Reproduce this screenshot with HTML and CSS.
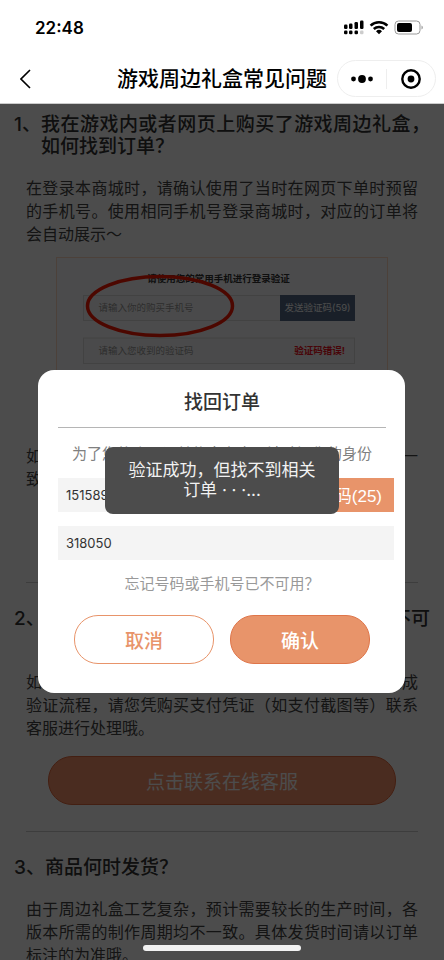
FILE: index.html
```html
<!DOCTYPE html>
<html lang="zh-CN">
<head>
<meta charset="utf-8">
<meta name="viewport" content="width=device-width, initial-scale=1">
<title>游戏周边礼盒常见问题</title>
<link rel="stylesheet" href="styles.css">
</head>
<body>
<div class="status">
  <span class="time">22:48</span>
  <svg class="status-icons" width="80" height="16" viewBox="0 0 80 16" aria-hidden="true">
    <rect x="0" y="4.500" width="3.500" height="4.500" rx="1.200"/>
    <rect x="5" y="3.500" width="3.500" height="5.500" rx="1.200"/>
    <rect x="10.500" y="2" width="3.500" height="7" rx="1.200"/>
    <rect x="16" y="0.500" width="3.500" height="8.500" rx="1.200"/>
    <rect x="0" y="10.500" width="3.500" height="3.800" rx="1.200"/>
    <rect x="5" y="10.500" width="3.500" height="3.800" rx="1.200"/>
    <rect x="10.500" y="10.500" width="3.500" height="3.800" rx="1.200"/>
    <rect x="16" y="10.500" width="3.500" height="3.800" rx="1.200" fill="#ccc"/>
    <g fill="none" stroke="#000" stroke-width="2.600">
      <path d="M26.600 5.600a12.200 12.200 0 0 1 16.800 0"/>
      <path d="M29.800 9a7.800 7.800 0 0 1 10.400 0"/>
    </g>
    <path d="M35 14.200l-3-3a4.400 4.400 0 0 1 6 0z"/>
    <rect x="51" y="1" width="25" height="13" rx="3.500" fill="none" stroke="#999"/>
    <rect x="53" y="3" width="15" height="9" rx="2"/>
    <path d="M77.500 5.500c1.800.6 1.800 3.400 0 4z" fill="#999"/>
  </svg>
</div>
<header class="nav">
  <button class="back" type="button" aria-label="返回">
    <svg width="12" height="20" viewBox="0 0 12 20"><path d="M10 1L1 10l9 9" fill="none" stroke="#000" stroke-width="1.600"/></svg>
  </button>
  <h1>游戏周边礼盒常见问题</h1>
  <div class="capsule">
    <button type="button" aria-label="更多">
      <svg width="24" height="20" viewBox="0 0 24 20"><circle cx="3.500" cy="10" r="2.400"/><circle cx="12" cy="10" r="3.900"/><circle cx="20.500" cy="10" r="2.400"/></svg>
    </button>
    <button type="button" aria-label="关闭">
      <svg width="20" height="20" viewBox="0 0 20 20"><circle cx="10" cy="10" r="8.700" fill="none" stroke="#000" stroke-width="2.400"/><circle cx="10" cy="10" r="3.400"/></svg>
    </button>
  </div>
</header>
<main class="page">
  <div class="faq">
    <section>
      <h2 class="first"><span>1、</span><span>我在游戏内或者网页上购买了游戏周边礼盒，如何找到订单？</span></h2>
      <p>在登录本商城时，请确认使用了当时在网页下单时预留的手机号。使用相同手机号登录商城时，对应的订单将会自动展示～</p>
      <svg class="shot" viewBox="0 0 664 348" role="img" aria-label="登录验证示例">
        <rect x="1" y="1" width="662" height="346" fill="#fcfcff" stroke="#ffd9c2" stroke-width="2"/>
        <text x="325" y="49" font-size="19" font-weight="700" fill="#333" text-anchor="middle">请使用您的常用手机进行登录验证</text>
        <rect x="55" y="77" width="542" height="50" fill="#f9f9fb" stroke="#ddd" stroke-width="2"/>
        <text x="85" y="108" font-size="19" fill="#999">请输入你的购买手机号</text>
        <rect x="448" y="76" width="150" height="52" fill="#546a88"/>
        <text x="523" y="108" font-size="19" fill="#fff" text-anchor="middle">发送验证码(59)</text>
        <rect x="55" y="162" width="542" height="51" fill="#f9f9fb" stroke="#ddd" stroke-width="2"/>
        <text x="85" y="194" font-size="19" fill="#999">请输入您收到的验证码</text>
        <text x="578" y="194" font-size="19" font-weight="700" fill="#f01020" text-anchor="end">验证码错误!</text>
        <ellipse cx="208" cy="98" rx="145" ry="59" fill="none" stroke="#ff1800" stroke-width="7"/>
      </svg>
      <p>如果还是找不到订单，请确认手机号码与下单时预留一致。</p>
      <button class="wide" type="button">点击找回订单</button>
    </section>
    <section>
      <h2><span>2、</span><span>忘记购买时的手机号码，或者该手机号已不可用怎么办？</span></h2>
      <p>如果您忘记了购买时的手机号码或该手机号已无法完成验证流程，请您凭购买支付凭证（如支付截图等）联系客服进行处理哦。</p>
      <button class="wide" type="button">点击联系在线客服</button>
    </section>
    <section>
      <h2><span>3、</span><span>商品何时发货？</span></h2>
      <p>由于周边礼盒工艺复杂，预计需要较长的生产时间，各版本所需的制作周期均不一致。具体发货时间请以订单标注的为准哦。</p>
    </section>
  </div>
  <div class="mask">
    <form class="dialog" role="dialog" aria-labelledby="dlg-title">
      <h3 id="dlg-title">找回订单</h3>
      <p class="tip">为了您的账号订单信息安全，请验证您的身份</p>
      <div class="field">
        <input type="tel" value="15158900000" aria-label="手机号">
        <button class="send" type="button">发送验证码(25)</button>
      </div>
      <div class="field">
        <input type="text" value="318050" aria-label="验证码">
      </div>
      <a class="forgot" href="#">忘记号码或手机号已不可用？</a>
      <div class="actions">
        <button class="cancel" type="button">取消</button>
        <button class="ok" type="submit">确认</button>
      </div>
      <div class="toast" role="status">验证成功，但找不到相关订单 · · ·...</div>
    </form>
  </div>
  <div class="home"></div>
</main>
</body>
</html>
```
FILE: styles.css
```css
* { box-sizing: border-box; }

body {
  margin: 0;
  height: 100vh;
  display: flex;
  flex-direction: column;
  overflow: hidden;
  background: #fff;
  color: #333;
  font-family: Inter, "Noto Sans CJK SC", sans-serif;
}

h1, h2, h3, p { margin: 0; }

button, input {
  margin: 0;
  padding: 0;
  border: 0;
  background: none;
  color: inherit;
  font: inherit;
}

svg { display: block; }

.status {
  display: flex;
  align-items: center;
  justify-content: space-between;
  height: 56px;
  padding: 0 20px 0 35px;
  flex: none;
}

.time {
  font-size: 17px;
  font-weight: 600;
  color: #000;
}

.nav {
  display: grid;
  grid-template-columns: 107px 1fr 107px;
  align-items: center;
  height: 48px;
  padding-bottom: 2px;
  border-bottom: 1px solid #ccc;
  flex: none;
}

.back { padding-left: 20px; justify-self: start; }

h1 {
  font-size: 21px;
  line-height: 28px;
  font-weight: 500;
  text-align: center;
  white-space: nowrap;
  color: #000;
}

.capsule {
  display: flex;
  align-items: center;
  width: 99px;
  height: 37px;
  border: 1px solid #eee;
  border-radius: 19px;
}

.capsule button {
  flex: 1;
  display: flex;
  justify-content: center;
}

.capsule button + button { border-left: 1px solid #eee; }

.page {
  position: relative;
  flex: 1;
  min-height: 0;
  overflow: hidden;
}

section {
  margin: 0 26px;
  padding: 25px 0 26px;
  border-bottom: 1px solid #ccc;
}

section:first-child { padding-top: 10px; }

h2 {
  display: grid;
  grid-template-columns: 31px 1fr;
  margin: 0 -12px 19px;
  font-size: 19px;
  line-height: 22px;
  font-weight: 500;
  text-align: justify;
}

h2.first { grid-template-columns: 27px 1fr; }

h2 span:first-child { white-space: nowrap; }

section p {
  font-size: 16px;
  line-height: 23px;
  text-align: justify;
  color: #444;
}

.shot {
  width: 332px;
  margin: 11px auto 14px;
}

.wide {
  display: block;
  width: calc(100% - 44px);
  height: 49px;
  margin: 16px auto 0;
  border: 1px solid #e2683c;
  border-radius: 24px;
  background: #f9946c;
  color: #fff;
  font-size: 19px;
}

.mask {
  position: absolute;
  inset: 0;
  display: flex;
  align-items: center;
  justify-content: center;
  padding: 0 39px 2px 38px;
  background: rgba(0, 0, 0, 0.7);
}

.dialog {
  position: relative;
  flex: 1;
  padding: 18px 19px 29px 20px;
  border-radius: 16px;
  background: #fff;
}

h3 {
  padding-bottom: 9px;
  border-bottom: 1px solid #b5b5b5;
  font-size: 19px;
  line-height: 30px;
  font-weight: 500;
  text-align: center;
}

.tip {
  margin: 13px 0 12px;
  font-size: 15px;
  line-height: 25px;
  text-align: center;
  white-space: nowrap;
  color: #808080;
}

.field {
  display: flex;
  height: 34px;
  margin: 0 -8px 14px 0;
  background: #f4f4f4;
}

.field input {
  flex: 1;
  min-width: 0;
  padding: 0 8px;
  font-size: 13px;
}

.send {
  padding: 0 12px;
  background: #e8946a;
  color: #fff;
  font-family: "Liberation Sans", "Noto Sans CJK SC", sans-serif;
  font-size: 17px;
}

.forgot {
  display: block;
  font-size: 15px;
  line-height: 20px;
  text-align: center;
  text-decoration: none;
  color: #999;
}

.actions {
  display: flex;
  gap: 16px;
  margin: 21px 16px 0;
}

.actions button {
  flex: 1;
  height: 49px;
  border: 1px solid #e8946a;
  border-radius: 24px;
  font-size: 19px;
  font-weight: 500;
  color: #e8946a;
}

.actions .ok {
  border-color: #df7549;
  background: #e8946a;
  color: #fff;
}

.toast {
  position: absolute;
  top: 77px;
  left: 67px;
  right: 66px;
  padding: 13px 20px 14px;
  border-radius: 8px;
  background: #4c4c4c;
  color: #f2f2f2;
  font-size: 17px;
  line-height: 20px;
  text-align: center;
}

.home {
  position: absolute;
  bottom: 9px;
  left: 50%;
  width: 158px;
  height: 6px;
  margin-left: -79px;
  border-radius: 3px;
  background: #f2f2f2;
}
```
